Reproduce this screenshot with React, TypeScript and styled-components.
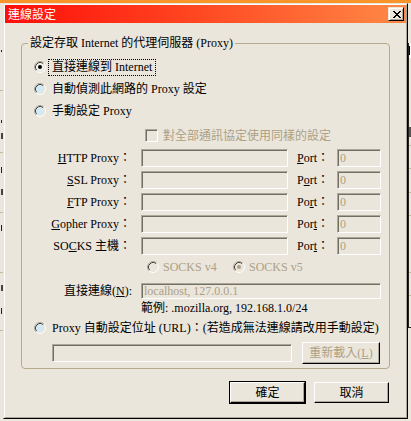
import React from "react";
import styled, { createGlobalStyle } from "styled-components";

const FACE = "#ebe6dc";
const SHADOW = "#aca899";
const DARK = "#716f64";
const GRAYTEXT = "#ada084";
const GROUP = "#b8a98d";
const BLUE = "#d2eaf6";

const Global = createGlobalStyle`
  html, body { margin: 0; padding: 0; background: ${FACE}; }
  body {
    font-family: "Liberation Serif", "Noto Sans CJK TC", serif;
    font-size: 12px;
    color: #000;
  }
`;

const Desktop = styled.div`
  position: relative;
  width: 411px;
  height: 421px;
  overflow: hidden;
  background: ${FACE};
`;

const Backdrop = styled.div`
  position: absolute;
  inset: 0;
`;

const TopBand = styled.div`
  height: 3px;
  background: #f7952b;
`;

const Mark = styled.div<{ $x: number; $y: number; $w: number; $h: number; $c: string }>`
  position: absolute;
  left: ${(p) => p.$x}px;
  top: ${(p) => p.$y}px;
  width: ${(p) => p.$w}px;
  height: ${(p) => p.$h}px;
  background: ${(p) => p.$c};
`;

const Window = styled.div`
  position: absolute;
  left: 3px;
  top: 3px;
  width: 405px;
  height: 416px;
  box-sizing: border-box;
  border: 1px solid;
  border-color: ${FACE} #000 #000 ${FACE};
  background: ${FACE};
`;

const Frame = styled.div`
  height: 100%;
  box-sizing: border-box;
  border: 1px solid;
  border-color: #fff ${SHADOW} ${SHADOW} #fff;
  display: flex;
  flex-direction: column;
`;

const TitleBar = styled.div`
  height: 18px;
  flex-shrink: 0;
  display: flex;
  align-items: center;
  justify-content: space-between;
  padding: 0 2px 0 3px;
  background: linear-gradient(90deg, #ff0e08 0%, #ff4420 45%, #ff8a46 100%);
`;

const TitleText = styled.span`
  color: #fff;
  font-family: "Noto Sans CJK TC", sans-serif;
  font-size: 12px;
  line-height: 14px;
`;

const CloseBtn = styled.div`
  width: 16px;
  height: 14px;
  box-sizing: border-box;
  border: 1px solid;
  border-color: ${FACE} #000 #000 ${FACE};
  box-shadow: inset 1px 1px #fff, inset -1px -1px ${SHADOW};
  background: ${FACE};
  display: flex;
  align-items: center;
  justify-content: center;
  padding-left: 1px;
`;

const CloseSvg = styled.svg`
  display: block;
`;

const Body = styled.div`
  flex: 1;
  display: flex;
  flex-direction: column;
  padding-left: 16px;
`;

const Group = styled.fieldset`
  margin: 13px 0 0 0;
  width: 369px;
  box-sizing: border-box;
  padding: 6px 0 4px 0;
  border: 1px solid ${GROUP};
  border-radius: 4px;
  min-width: 0;
`;

const Legend = styled.legend`
  margin-left: 6px;
  padding: 0 2px;
  line-height: 14px;
  font-size: 12px;
  white-space: nowrap;
`;

const Content = styled.div`
  display: flex;
  flex-direction: column;
`;

const RadioRow = styled.div<{ $h: number; $mt?: number }>`
  display: flex;
  align-items: center;
  height: ${(p) => p.$h}px;
  margin-top: ${(p) => p.$mt ?? 0}px;
  padding-left: 12px;
`;

const OptionLabel = styled.span<{ $focus?: boolean }>`
  margin-left: 2px;
  padding: 0 3px;
  line-height: 15px;
  border: 1px dotted ${(p) => (p.$focus ? "#000" : "transparent")};
  white-space: nowrap;
`;

const RadioSvg = styled.svg`
  display: block;
  flex-shrink: 0;
`;

const CheckRow = styled.div`
  display: flex;
  align-items: center;
  gap: 5px;
  height: 27px;
  padding-left: 123px;
  color: ${GRAYTEXT};
  line-height: 14px;
  white-space: nowrap;
`;

const CheckBox = styled.span`
  width: 13px;
  height: 13px;
  flex-shrink: 0;
  box-sizing: border-box;
  border: 1px solid;
  border-color: ${SHADOW} #fff #fff ${SHADOW};
  box-shadow: inset 1px 1px ${DARK}, inset -1px -1px ${FACE};
  background: ${FACE};
`;

const FieldGrid = styled.div<{ $row: number; $mt?: number }>`
  display: grid;
  grid-template-columns: 119px 147px 49px 44px;
  grid-auto-rows: ${(p) => p.$row}px;
  row-gap: 4px;
  align-items: center;
  margin-top: ${(p) => p.$mt ?? 0}px;
`;

const FieldLabel = styled.span<{ $pr: number }>`
  text-align: right;
  padding-right: ${(p) => p.$pr}px;
  line-height: 14px;
  white-space: nowrap;
`;

const PortLabel = styled.span`
  padding-left: 9px;
  line-height: 14px;
  white-space: nowrap;
`;

const Field = styled.input<{ $h: number; $span?: boolean; $w?: number }>`
  box-sizing: border-box;
  width: ${(p) => (p.$w ? `${p.$w}px` : "100%")};
  height: ${(p) => p.$h}px;
  min-width: 0;
  margin: 0;
  padding: 0 2px;
  border: 1px solid;
  border-color: ${SHADOW} #fff #fff ${SHADOW};
  box-shadow: inset 1px 1px ${DARK}, inset -1px -1px ${FACE};
  background: ${FACE};
  color: ${GRAYTEXT};
  font-family: "Liberation Serif", "Noto Sans CJK TC", serif;
  font-size: 12px;
  outline: none;
  grid-column: ${(p) => (p.$span ? "2 / 5" : "auto")};
`;

const SocksRow = styled.div`
  display: flex;
  align-items: center;
  height: 16px;
  margin-top: 4px;
  padding-left: 125px;
  color: ${GRAYTEXT};
  line-height: 14px;
`;

const SocksOption = styled.span<{ $w?: number }>`
  display: flex;
  align-items: center;
  gap: 4px;
  width: ${(p) => (p.$w ? `${p.$w}px` : "auto")};
  white-space: nowrap;
`;

const Example = styled.div`
  margin-top: 2px;
  padding-left: 119px;
  line-height: 14px;
  white-space: nowrap;
`;

const UrlRow = styled.div`
  display: flex;
  align-items: center;
  gap: 10px;
  height: 22px;
  margin-top: 6px;
  padding-left: 30px;
`;

const Btn = styled.button<{ $w: number; $h: number; $default?: boolean }>`
  width: ${(p) => p.$w}px;
  height: ${(p) => p.$h}px;
  flex-shrink: 0;
  box-sizing: border-box;
  margin: 0;
  padding: 0;
  border: 1px solid;
  border-color: #fff #000 #000 #fff;
  box-shadow: inset -1px -1px ${SHADOW}${(p) => (p.$default ? ", 0 0 0 1px #000" : "")};
  background: ${FACE};
  color: #000;
  font-family: "Liberation Serif", "Noto Sans CJK TC", serif;
  font-size: 12px;
  line-height: 14px;
  display: flex;
  align-items: center;
  justify-content: center;
  &:disabled {
    color: ${GRAYTEXT};
  }
`;

const ButtonRow = styled.div`
  display: flex;
  justify-content: flex-end;
  gap: 9px;
  width: 369px;
  box-sizing: border-box;
  padding-right: 1px;
  margin-top: 13px;
`;

const U = styled.span`
  text-decoration: underline;
`;

const X_PIX = ["11000011", "01100110", "00111100", "00011000", "00111100", "01100110", "11000011"];

function CloseGlyph() {
  return (
    <CloseSvg width="8" height="7" viewBox="0 0 8 7" shapeRendering="crispEdges">
      {X_PIX.flatMap((row, y) =>
        row.split("").map((c, x) =>
          c === "1" ? <rect key={`${x}-${y}`} x={x} y={y} width="1" height="1" fill="#000" /> : null
        )
      )}
    </CloseSvg>
  );
}

function Radio({ checked, fill, disabled }: { checked?: boolean; fill: string; disabled?: boolean }) {
  return (
    <RadioSvg width="12" height="12" viewBox="0 0 12 12">
      <circle cx="6" cy="6" r="4.2" fill={fill} />
      <path d="M2.11 9.89A5.5 5.5 0 0 1 9.89 2.11" stroke={SHADOW} fill="none" />
      <path d="M9.89 2.11A5.5 5.5 0 0 1 2.11 9.89" stroke="#fff" fill="none" />
      <path d="M2.82 9.18A4.5 4.5 0 0 1 9.18 2.82" stroke="#404040" fill="none" />
      <path d="M9.18 2.82A4.5 4.5 0 0 1 2.82 9.18" stroke={FACE} fill="none" />
      {checked && <circle cx="6" cy="6" r="2" fill={disabled ? GRAYTEXT : "#000"} />}
    </RadioSvg>
  );
}

const proxies: { key: string; label: React.ReactNode; port: React.ReactNode }[] = [
  { key: "http", label: <><U>H</U>TTP Proxy：</>, port: <><U>P</U>ort：</> },
  { key: "ssl", label: <><U>S</U>SL Proxy：</>, port: <>P<U>o</U>rt：</> },
  { key: "ftp", label: <><U>F</U>TP Proxy：</>, port: <>Po<U>r</U>t：</> },
  { key: "gopher", label: <><U>G</U>opher Proxy：</>, port: <>Por<U>t</U>：</> },
  { key: "socks", label: <>SO<U>C</U>KS 主機：</>, port: <>Por<U>t</U>：</> },
];

const marks = [
  { x: 0, y: 90, w: 3, h: 1, c: "#c9b99b" },
  { x: 0, y: 152, w: 3, h: 1, c: "#c9b99b" },
  { x: 0, y: 212, w: 3, h: 1, c: "#c9b99b" },
  { x: 0, y: 272, w: 3, h: 1, c: "#c9b99b" },
  { x: 0, y: 330, w: 3, h: 1, c: "#c9b99b" },
  { x: 1, y: 50, w: 1, h: 2, c: "#222" },
  { x: 1, y: 120, w: 1, h: 3, c: "#222" },
  { x: 1, y: 133, w: 2, h: 6, c: "#444" },
  { x: 1, y: 167, w: 1, h: 6, c: "#222" },
  { x: 1, y: 189, w: 2, h: 6, c: "#444" },
  { x: 1, y: 225, w: 1, h: 6, c: "#222" },
  { x: 1, y: 285, w: 2, h: 6, c: "#444" },
  { x: 1, y: 308, w: 1, h: 6, c: "#222" },
  { x: 408, y: 43, w: 1, h: 284, c: "#222" },
  { x: 409, y: 43, w: 2, h: 15, c: "#fff" },
  { x: 409, y: 46, w: 1, h: 9, c: "#000" },
  { x: 409, y: 127, w: 2, h: 10, c: "#555" },
  { x: 409, y: 145, w: 2, h: 1, c: "#c9b99b" },
  { x: 409, y: 168, w: 2, h: 1, c: "#c9b99b" },
  { x: 409, y: 192, w: 2, h: 1, c: "#c9b99b" },
  { x: 409, y: 215, w: 2, h: 1, c: "#c9b99b" },
  { x: 409, y: 272, w: 2, h: 1, c: "#c9b99b" },
  { x: 409, y: 295, w: 2, h: 1, c: "#c9b99b" },
  { x: 408, y: 327, w: 3, h: 1, c: "#222" },
];

export default function App() {
  return (
    <>
      <Global />
      <Desktop>
        <Backdrop>
          <TopBand />
          {marks.map((m, i) => (
            <Mark key={i} $x={m.x} $y={m.y} $w={m.w} $h={m.h} $c={m.c} />
          ))}
        </Backdrop>
        <Window>
          <Frame>
            <TitleBar>
              <TitleText>連線設定</TitleText>
              <CloseBtn>
                <CloseGlyph />
              </CloseBtn>
            </TitleBar>
            <Body>
              <Group>
                <Legend>設定存取 Internet 的代理伺服器 (Proxy)</Legend>
                <Content>
                  <RadioRow $h={22}>
                    <Radio checked fill="#f2f1ee" />
                    <OptionLabel $focus>直接連線到 Internet</OptionLabel>
                  </RadioRow>
                  <RadioRow $h={22}>
                    <Radio fill={BLUE} />
                    <OptionLabel>自動偵測此網路的 Proxy 設定</OptionLabel>
                  </RadioRow>
                  <RadioRow $h={22}>
                    <Radio fill={BLUE} />
                    <OptionLabel>手動設定 Proxy</OptionLabel>
                  </RadioRow>
                  <CheckRow>
                    <CheckBox />
                    <span>對全部通訊協定使用同樣的設定</span>
                  </CheckRow>
                  <FieldGrid $row={18}>
                    {proxies.map((p) => (
                      <React.Fragment key={p.key}>
                        <FieldLabel $pr={10}>{p.label}</FieldLabel>
                        <Field readOnly tabIndex={-1} value="" $h={18} />
                        <PortLabel>{p.port}</PortLabel>
                        <Field readOnly tabIndex={-1} value="0" $h={18} />
                      </React.Fragment>
                    ))}
                  </FieldGrid>
                  <SocksRow>
                    <SocksOption $w={86}>
                      <Radio fill={FACE} disabled />
                      SOCKS v4
                    </SocksOption>
                    <SocksOption>
                      <Radio fill={FACE} checked disabled />
                      SOCKS v5
                    </SocksOption>
                  </SocksRow>
                  <FieldGrid $row={16} $mt={8}>
                    <FieldLabel $pr={9}>
                      直接連線(<U>N</U>):
                    </FieldLabel>
                    <Field readOnly tabIndex={-1} value="localhost, 127.0.0.1" $h={16} $span />
                  </FieldGrid>
                  <Example>範例: .mozilla.org, 192.168.1.0/24</Example>
                  <RadioRow $h={16} $mt={5}>
                    <Radio fill={BLUE} />
                    <OptionLabel>Proxy 自動設定位址 (URL)：(若造成無法連線請改用手動設定)</OptionLabel>
                  </RadioRow>
                  <UrlRow>
                    <Field readOnly tabIndex={-1} value="" $h={18} $w={240} />
                    <Btn $w={78} $h={22} disabled>
                      重新載入(<U>L</U>)
                    </Btn>
                  </UrlRow>
                </Content>
              </Group>
              <ButtonRow>
                <Btn $w={75} $h={21} $default>
                  確定
                </Btn>
                <Btn $w={75} $h={21}>
                  取消
                </Btn>
              </ButtonRow>
            </Body>
          </Frame>
        </Window>
      </Desktop>
    </>
  );
}
